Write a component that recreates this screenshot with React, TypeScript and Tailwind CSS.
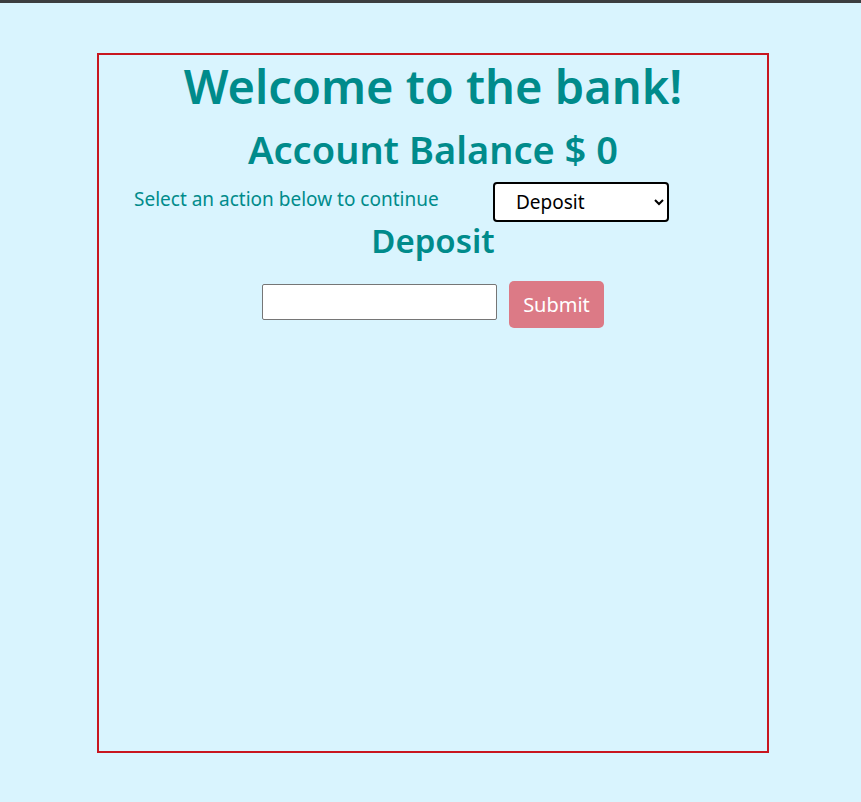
import React, { useState } from "react";

// Simple bank page: balance + action picker
export default function App() {
  const [action, setAction] = useState("Deposit");
  const [amount, setAmount] = useState("");

  return (
    <div className="min-h-[802px] bg-[#d9f4fe] font-['Noto_Sans',sans-serif]">
      {/* thin window bar */}
      <div className="h-[3px] bg-[#3c3d40]" />

      <div className="pt-[50px]">
        <div className="ml-[97px] w-[672px] h-[700px] border-2 border-[#c8161f] text-[#008b8b]">
          <h1 className="mt-[8px] text-center text-[47px] leading-none font-semibold">
            Welcome to the bank!
          </h1>
          <h2 className="mt-[20px] text-center text-[38px] leading-none font-semibold">
            Account Balance $ 0
          </h2>

          {/* action picker */}
          <div className="mt-[12px] flex items-start">
            <p className="ml-[35px] mt-[10px] text-[19px] leading-none">
              Select an action below to continue
            </p>
            <select
              value={action}
              onChange={(e) => setAction(e.target.value)}
              className="ml-auto mr-[98px] mt-[2px] w-[176px] h-[40px] rounded-[4px] border-2 border-black bg-white pl-[17px] text-[19px] text-black"
            >
              <option>Deposit</option>
              <option>Withdraw</option>
            </select>
          </div>

          <h3 className="mt-[2px] text-center text-[33px] leading-none font-semibold">
            {action}
          </h3>

          <div className="mt-[24px] flex justify-center items-start gap-[12px]">
            <input
              value={amount}
              onChange={(e) => setAmount(e.target.value)}
              className="mt-[3px] w-[235px] h-[36px] rounded-[2px] border border-[#767676] bg-white px-2"
            />
            <button className="w-[95px] h-[47px] rounded-[5px] bg-[#dc7a86] text-[20px] text-white">
              Submit
            </button>
          </div>
        </div>
      </div>
    </div>
  );
}
